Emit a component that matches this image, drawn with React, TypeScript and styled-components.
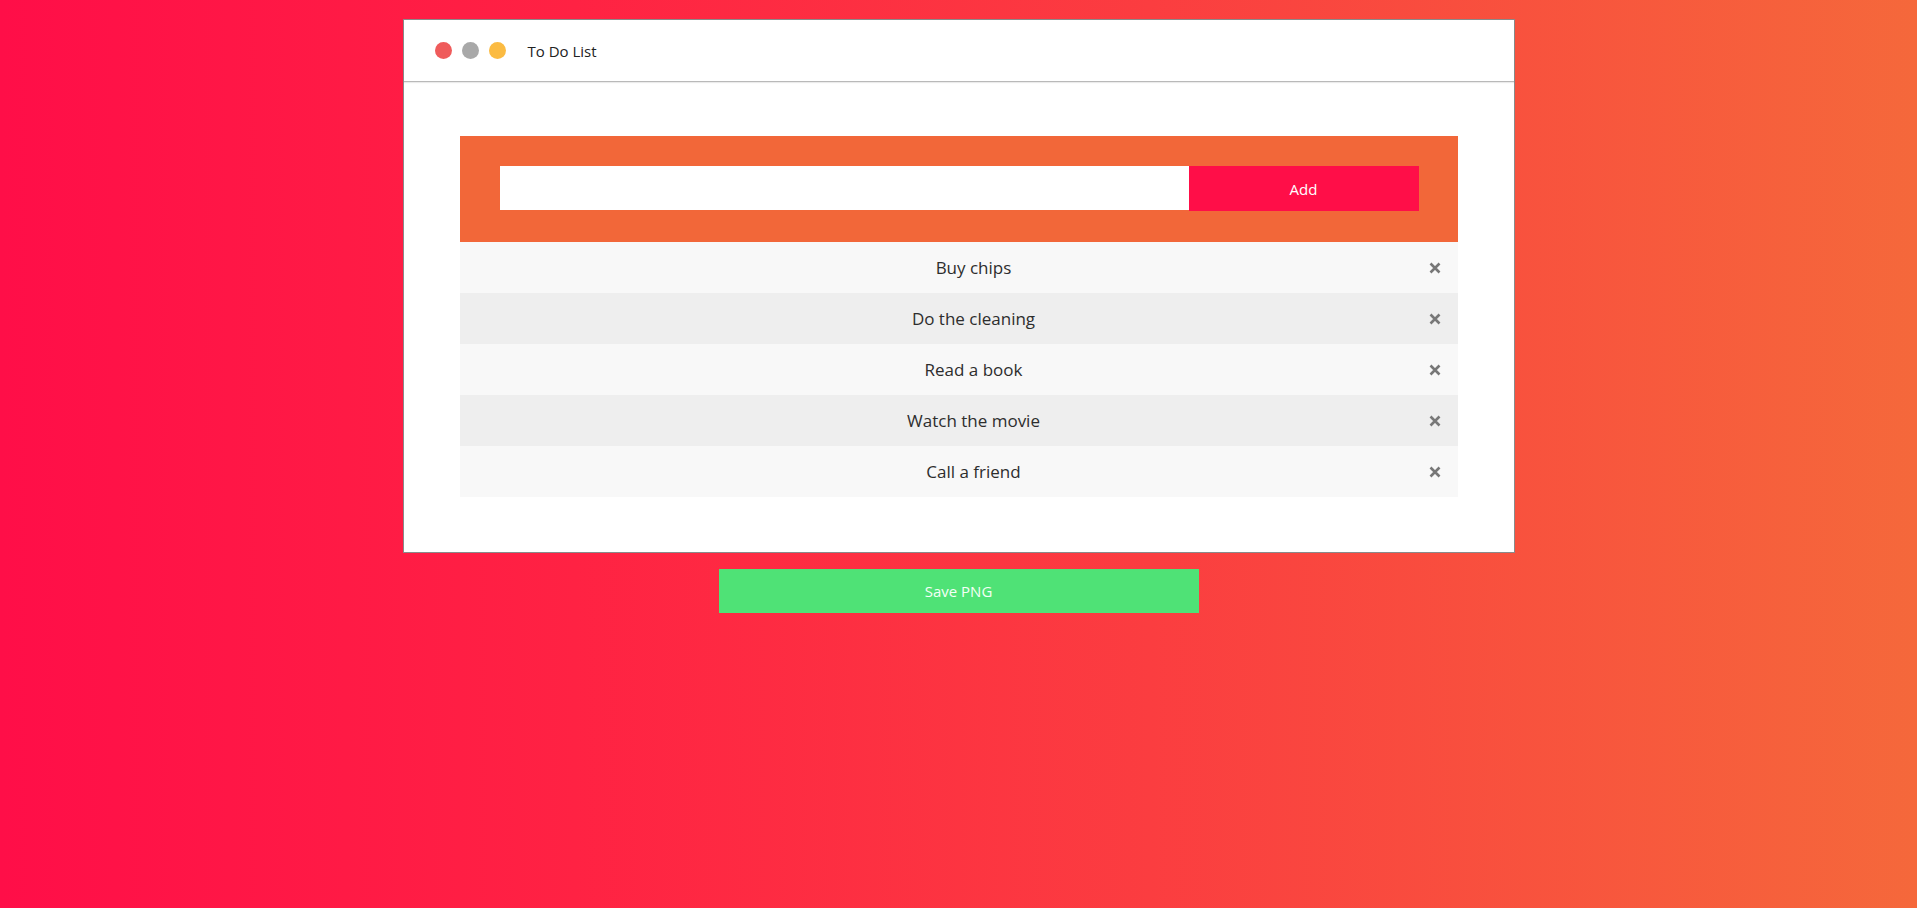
import React, { useState } from "react";
import styled, { createGlobalStyle } from "styled-components";

const Global = createGlobalStyle`
  html, body { margin: 0; padding: 0; }
  body {
    min-height: 908px;
    background: linear-gradient(to right, #ff0e48 0%, #ff2243 30%, #fb3d40 60%, #f5683b 100%);
    font-family: "Open Sans", "Noto Sans", sans-serif;
  }
`;

const Page = styled.div`
  display: flex;
  flex-direction: column;
  align-items: center;
  padding-top: 19px;
`;

const Window = styled.div`
  box-sizing: border-box;
  width: 1112px;
  background: #fff;
  border: 1px solid #8a8a8a;
`;

const TitleBar = styled.div`
  display: flex;
  align-items: center;
  height: 61px;
  padding-left: 31px;
  border-bottom: 1px solid #b9b9b9;
  box-shadow: 0 1px 1px rgba(0, 0, 0, 0.08);
`;

const Dot = styled.span<{ $c: string }>`
  width: 17px;
  height: 17px;
  border-radius: 50%;
  background: ${(p) => p.$c};
  margin-right: 10px;
`;

const Title = styled.span`
  margin-left: 12px;
  font-size: 15px;
  color: #222;
`;

const Content = styled.div`
  padding: 54px 56px 55px 56px;
`;

const Form = styled.div`
  display: flex;
  align-items: flex-start;
  background: #f26739;
  padding: 30px 39px 31px 40px;
`;

const Input = styled.input`
  flex: 1;
  height: 44px;
  border: none;
  outline: none;
  background: #fff;
  padding: 0 12px;
  font-size: 16px;
  font-family: inherit;
`;

const AddButton = styled.button`
  width: 230px;
  height: 45px;
  border: none;
  background: #ff0e48;
  color: #fff;
  font-size: 15px;
  font-family: inherit;
  cursor: pointer;
`;

const List = styled.ul`
  list-style: none;
  margin: 0;
  padding: 0;
`;

const Item = styled.li<{ $odd: boolean }>`
  position: relative;
  display: flex;
  align-items: center;
  justify-content: center;
  height: 51px;
  padding-left: 30px;
  background: ${(p) => (p.$odd ? "#f8f8f8" : "#eeeeee")};
  font-size: 17px;
  color: #2d2d2d;
`;

const Remove = styled.button`
  position: absolute;
  right: 15px;
  top: 50%;
  transform: translateY(-50%);
  width: 16px;
  height: 16px;
  padding: 0;
  border: none;
  background: none;
  display: flex;
  align-items: center;
  justify-content: center;
  cursor: pointer;
`;

const SaveButton = styled.button`
  margin-top: 16px;
  width: 480px;
  height: 44px;
  border: none;
  background: #4fe276;
  color: #f4fff6;
  font-size: 15px;
  font-family: "Open Sans", "Noto Sans", sans-serif;
  cursor: pointer;
`;

const Cross = () => (
  <svg width="12" height="12" viewBox="0 0 12 12">
    <path d="M1.5 1.5 L10.5 10.5 M10.5 1.5 L1.5 10.5" stroke="#777" strokeWidth="2.6" strokeLinecap="butt" />
  </svg>
);

export default function App() {
  const [items] = useState(["Buy chips", "Do the cleaning", "Read a book", "Watch the movie", "Call a friend"]);
  return (
    <>
      <Global />
      <Page>
        <Window>
          <TitleBar>
            <Dot $c="#ef5b5b" />
            <Dot $c="#a8a8a8" />
            <Dot $c="#fbbb42" />
            <Title>To Do List</Title>
          </TitleBar>
          <Content>
            <Form>
              <Input />
              <AddButton>Add</AddButton>
            </Form>
            <List>
              {items.map((t, i) => (
                <Item key={t} $odd={i % 2 === 0}>
                  {t}
                  <Remove aria-label="remove">
                    <Cross />
                  </Remove>
                </Item>
              ))}
            </List>
          </Content>
        </Window>
        <SaveButton>Save PNG</SaveButton>
      </Page>
    </>
  );
}
